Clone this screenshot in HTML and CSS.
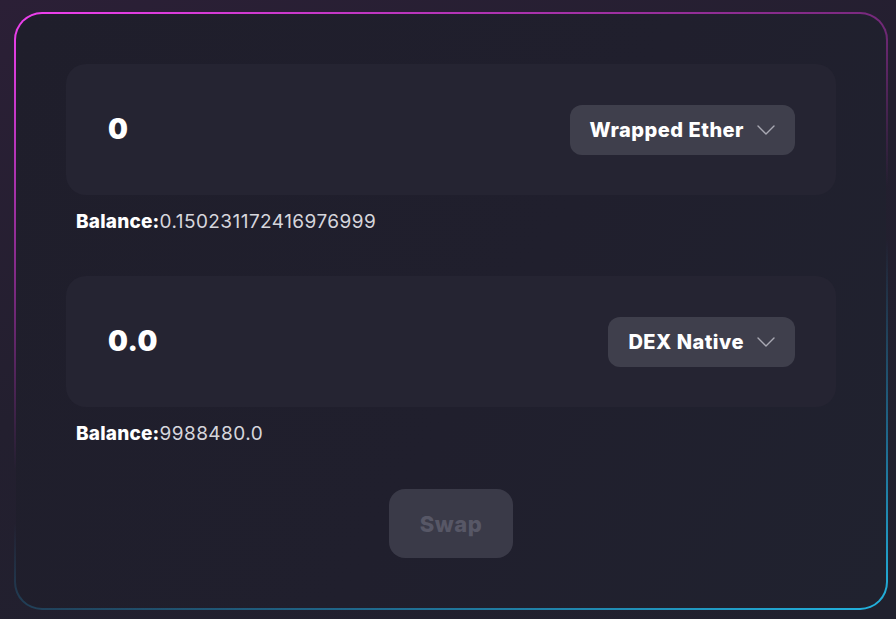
FILE: index.html
```html
<!DOCTYPE html>
<html lang="en">
<head>
<meta charset="utf-8">
<title>Swap</title>
<link rel="stylesheet" href="styles.css">
</head>
<body>
<div class="frame">
  <div class="card">
    <div class="field">
      <div class="amount">0</div>
      <button class="token">
        <span>Wrapped Ether</span>
        <svg class="chev" width="18" height="10" viewBox="0 0 18 10"><path d="M1 1 L9 9 L17 1" fill="none" stroke="#a9a9b3" stroke-width="1.4" stroke-linecap="round" stroke-linejoin="round"/></svg>
      </button>
    </div>
    <div class="balance"><b>Balance:</b>0.150231172416976999</div>
    <div class="field">
      <div class="amount">0.0</div>
      <button class="token">
        <span>DEX Native</span>
        <svg class="chev" width="18" height="10" viewBox="0 0 18 10"><path d="M1 1 L9 9 L17 1" fill="none" stroke="#a9a9b3" stroke-width="1.4" stroke-linecap="round" stroke-linejoin="round"/></svg>
      </button>
    </div>
    <div class="balance"><b>Balance:</b>9988480.0</div>
    <div class="actions">
      <button class="swap" disabled>Swap</button>
    </div>
  </div>
</div>
</body>
</html>
```
FILE: styles.css
```css
* { box-sizing: border-box; }
html, body { height: 100%; }
body {
  margin: 0;
  padding: 12px 8px 9px 14px;
  background: linear-gradient(160deg, #2b1f36 0%, #231f2f 45%, #20212e 100%);
  font-family: "Inter", "Liberation Sans", sans-serif;
  color: #fff;
}
.frame {
  width: 874px;
  height: 598px;
  padding: 2px;
  border-radius: 28px;
  background:
    linear-gradient(162deg, #f040f0 0%, rgba(190, 50, 190, 0.6) 30%, rgba(120, 40, 130, 0) 52%, rgba(30, 140, 190, 0) 58%, rgba(30, 150, 200, 0.6) 80%, #22b4e0 100%);
}
.card {
  height: 100%;
  border-radius: 26px;
  background: linear-gradient(120deg, #1f1e2b 0%, #201f2d 55%, #20222f 100%);
  padding: 50px 50px 0 50px;
}
.field {
  height: 131px;
  border-radius: 20px;
  background: #252432;
  padding: 0 41px 0 42px;
  display: flex;
  align-items: center;
  justify-content: space-between;
}
.amount {
  font-size: 28px;
  font-weight: 900;
  letter-spacing: 0.5px;
  margin-top: -1px;
}
.token {
  height: 50px;
  border: 0;
  border-radius: 12px;
  background: #3f3f4c;
  color: #fff;
  font-family: inherit;
  font-size: 20px;
  font-weight: 800;
  letter-spacing: 0.5px;
  padding: 0 20px;
  display: flex;
  align-items: center;
  gap: 13px;
  margin-top: 0;
}
.chev { display: block; margin-top: 1px; }
.balance {
  height: 81px;
  padding: 15px 0 0 10px;
  font-size: 19px;
  letter-spacing: 0.45px;
  color: #d6d6dc;
}
.balance b { color: #fff; font-weight: 800; letter-spacing: 0.2px; }
.actions {
  display: flex;
  justify-content: center;
  margin-top: 1px;
}
.swap {
  width: 124px;
  height: 69px;
  border: 0;
  border-radius: 16px;
  background: #3a3a48;
  color: #575766;
  font-family: inherit;
  font-size: 22px;
  font-weight: 800;
  letter-spacing: 0.5px;
}
```
